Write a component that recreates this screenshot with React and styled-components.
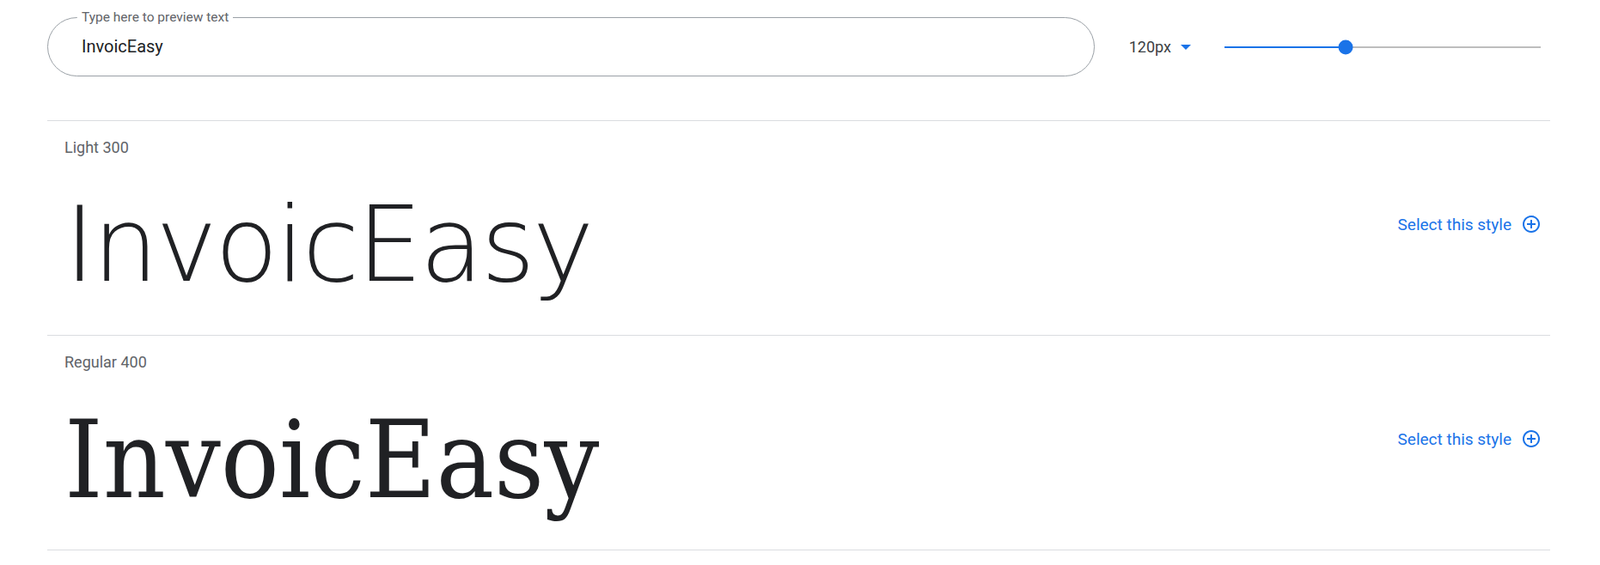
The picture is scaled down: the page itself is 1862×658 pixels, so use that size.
import React, { useState } from 'react';
import styled, { createGlobalStyle } from 'styled-components';

const GlobalStyle = createGlobalStyle`
  body {
    margin: 0;
    background: #fff;
    font-family: Roboto, "Liberation Sans", sans-serif;
  }
`;

const Page = styled.div`
  padding: 0 58px 0 55px;
`;

const Header = styled.div`
  display: flex;
  align-items: center;
  padding: 11px 0 51px;
`;

const Field = styled.fieldset`
  flex: 1;
  min-width: 0;
  margin: 0;
  padding: 0 34px 9px;
  border: 1px solid #9aa0a6;
  border-radius: 35px;
`;

const Legend = styled.legend`
  padding: 0 5px;
  font-size: 15.5px;
  line-height: 18px;
  color: #5f6368;
`;

const TextInput = styled.input`
  display: block;
  box-sizing: border-box;
  width: 100%;
  height: 50px;
  padding: 0 5px;
  border: none;
  outline: none;
  background: transparent;
  font-family: inherit;
  font-size: 20px;
  color: #202124;
`;

const Controls = styled.div`
  display: flex;
  align-items: center;
  padding-top: 9px;
`;

const SizeSelect = styled.button`
  display: flex;
  align-items: center;
  gap: 11px;
  margin-left: 40px;
  padding: 0;
  border: none;
  background: none;
  font-family: inherit;
  font-size: 18px;
  color: #3c4043;
  cursor: pointer;
`;

const Caret = styled.span`
  width: 0;
  height: 0;
  border-left: 6px solid transparent;
  border-right: 6px solid transparent;
  border-top: 6px solid #1a73e8;
`;

const Slider = styled.div`
  position: relative;
  display: flex;
  align-items: center;
  width: 368px;
  height: 20px;
  margin: 0 11px 0 39px;
`;

const Fill = styled.div`
  height: 2px;
  background: #1a73e8;
`;

const Rest = styled.div`
  flex: 1;
  height: 2px;
  background: #bdbdbd;
`;

const Thumb = styled.div`
  position: absolute;
  top: 50%;
  width: 17px;
  height: 17px;
  border-radius: 50%;
  background: #1a73e8;
  transform: translate(-50%, -50%);
`;

const List = styled.div`
  border-bottom: 1px solid #dadce0;
`;

const StyleRow = styled.section`
  display: flex;
  align-items: center;
  border-top: 1px solid #dadce0;
  padding: 21px 10px 41px 20px;
`;

const Specimen = styled.div`
  flex: 1;
  min-width: 0;
`;

const StyleName = styled.div`
  height: 20px;
  margin-bottom: 41px;
  font-size: 18px;
  line-height: 20px;
  color: #5f6368;
`;

const Preview = styled.div`
  height: 126px;
  font-family: ${p => (p.$light ? '"DejaVu Sans", sans-serif' : '"DejaVu Serif Condensed", "DejaVu Serif", serif')};
  font-weight: ${p => (p.$light ? 200 : 400)};
  font-size: ${p => (p.$light ? '121px' : '126px')};
  letter-spacing: ${p => (p.$light ? '-3px' : '0')};
  line-height: 126px;
  color: #202124;
  white-space: nowrap;
`;

const SelectButton = styled.button`
  display: flex;
  align-items: center;
  gap: 11px;
  margin-top: 11px;
  padding: 0;
  border: none;
  background: none;
  font-family: inherit;
  font-size: 19px;
  color: #1a73e8;
  cursor: pointer;
`;

const AddIcon = () => (
  <svg width="24" height="24" viewBox="0 0 24 24" fill="#1a73e8">
    <path d="M13 7h-2v4H7v2h4v4h2v-4h4v-2h-4V7zm-1-5C6.48 2 2 6.48 2 12s4.48 10 10 10 10-4.48 10-10S17.52 2 12 2zm0 18c-4.41 0-8-3.59-8-8s3.59-8 8-8 8 3.59 8 8-3.59 8-8 8z" />
  </svg>
);

const styles = [
  { name: 'Light 300', light: true },
  { name: 'Regular 400', light: false },
];

const MIN = 8;
const MAX = 300;

export default function App() {
  const [text, setText] = useState('InvoicEasy');
  const size = 120;
  const pct = ((size - MIN) / (MAX - MIN)) * 100;

  return (
    <>
      <GlobalStyle />
      <Page>
        <Header>
          <Field>
            <Legend>Type here to preview text</Legend>
            <TextInput value={text} onChange={e => setText(e.target.value)} />
          </Field>
          <Controls>
            <SizeSelect>
              {size}px
              <Caret />
            </SizeSelect>
            <Slider>
              <Fill style={{ width: `${pct}%` }} />
              <Rest />
              <Thumb style={{ left: `${pct}%` }} />
            </Slider>
          </Controls>
        </Header>
        <List>
          {styles.map(s => (
            <StyleRow key={s.name}>
              <Specimen>
                <StyleName>{s.name}</StyleName>
                <Preview $light={s.light}>{text}</Preview>
              </Specimen>
              <SelectButton>
                Select this style
                <AddIcon />
              </SelectButton>
            </StyleRow>
          ))}
        </List>
      </Page>
    </>
  );
}
